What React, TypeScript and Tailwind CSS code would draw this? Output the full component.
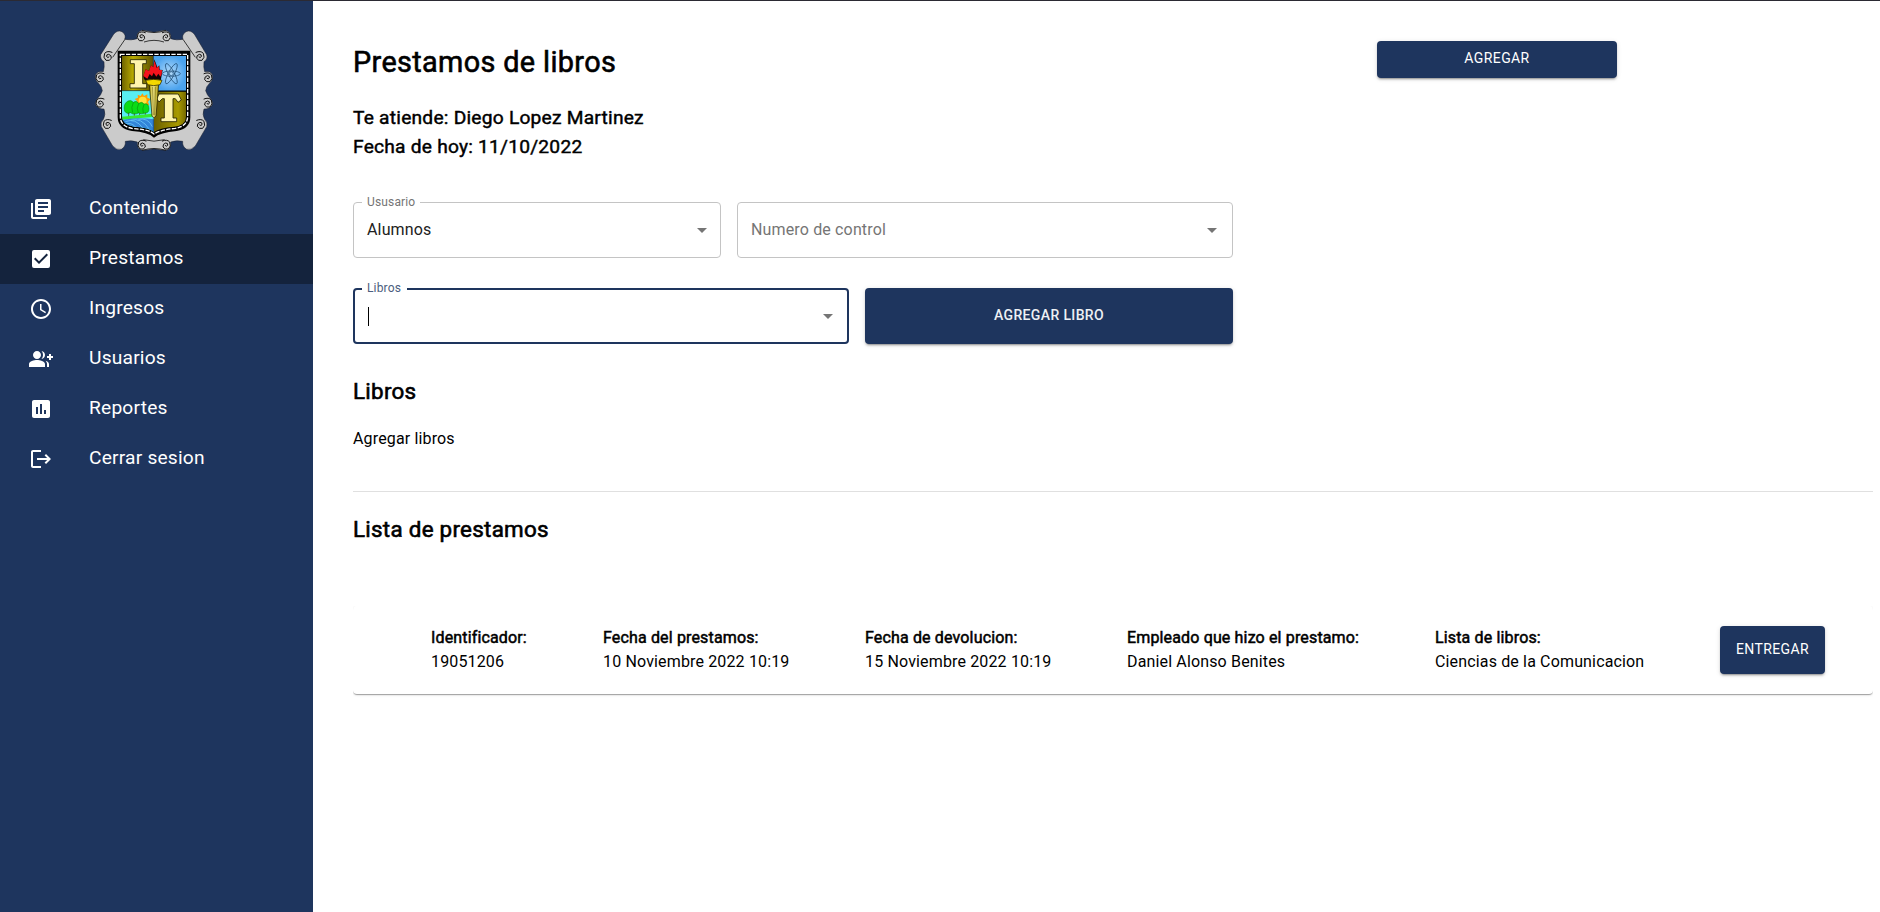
import React from "react";
import { MdLibraryBooks, MdCheckBox, MdAccessTime, MdGroupAdd, MdAssessment, MdLogout, MdArrowDropDown } from "react-icons/md";

const FRAME =
  "M62 104 L100 44 Q112 28 126 35 Q140 44 134 58 Q154 62 171 56 Q168 36 186 31 Q204 33 222 37 Q240 33 256 31 Q276 36 272 56 Q290 62 309 58 Q304 44 318 35 Q332 28 344 44 L380 104 Q384 118 372 125 Q370 142 374 155 Q392 152 397 164 Q400 180 390 188 Q378 200 377 212 Q380 224 392 236 Q400 246 396 256 Q388 268 372 267 Q366 284 374 298 Q384 308 380 320 L346 378 Q334 392 320 388 Q306 380 308 364 Q290 360 272 366 Q274 388 258 391 Q240 390 222 386 Q204 390 188 391 Q170 388 172 366 Q154 360 136 364 Q138 380 124 388 Q110 392 98 378 L64 320 Q60 308 70 298 Q78 284 72 267 Q56 268 48 256 Q44 246 52 236 Q64 224 67 212 Q66 200 54 188 Q44 180 47 164 Q52 152 70 155 Q74 142 72 125 Q60 118 62 104 Z";

function Curl({ x, y, flip }: { x: number; y: number; flip?: boolean }) {
  return (
    <path
      transform={`translate(${x} ${y}) scale(${flip ? -1 : 1} 1)`}
      fill="#cbcbcb"
      stroke="#111"
      strokeWidth="3"
      strokeLinecap="round"
      d="M12 -12 Q-2 -18 -10 -9 Q-16 4 -6 12 Q5 15 10 6 Q11 -4 2 -6 Q-6 -6 -4 1 Q-1 6 3 2"
    />
  );
}

function Crest() {
  return (
    <svg viewBox="0 0 450 420" className="h-[140px] w-[150px]" aria-hidden="true">
      <defs>
        <linearGradient id="gold" x1="0" x2="1">
          <stop offset="0" stopColor="#6e6400" />
          <stop offset="0.35" stopColor="#b8aa00" />
          <stop offset="1" stopColor="#5c5100" />
        </linearGradient>
        <linearGradient id="gold2" x1="0" x2="1">
          <stop offset="0" stopColor="#6a5e00" />
          <stop offset="0.75" stopColor="#a89a00" />
          <stop offset="1" stopColor="#756900" />
        </linearGradient>
        <radialGradient id="sky">
          <stop offset="0" stopColor="#b5dcfb" />
          <stop offset="1" stopColor="#4ba3ee" />
        </radialGradient>
        <linearGradient id="torch" x1="0" x2="1">
          <stop offset="0" stopColor="#a59200" />
          <stop offset="0.4" stopColor="#fff59a" />
          <stop offset="1" stopColor="#a59200" />
        </linearGradient>
        <clipPath id="shield">
          <path d="M126 107 H318 V290 Q318 316 282 320 Q238 324 222 336 Q208 322 162 320 Q126 314 126 288 Z" />
        </clipPath>
      </defs>
      <path fill="#cbcbcb" stroke="#1a1f2b" strokeWidth="1.6" strokeLinejoin="round" d={FRAME} />
      <path
        fill="none"
        stroke="#111"
        strokeWidth="2.4"
        d="M186 31 Q222 44 258 31 M192 66 Q222 56 252 66 M190 359 Q222 368 254 359 M186 391 Q222 380 258 391 M98 112 L135 58 M346 112 L309 58"
      />
      <Curl x={184} y={50} />
      <Curl x={259} y={50} flip />
      <Curl x={84} y={109} />
      <Curl x={360} y={109} flip />
      <Curl x={60} y={173} />
      <Curl x={384} y={173} flip />
      <Curl x={60} y={249} />
      <Curl x={384} y={249} flip />
      <Curl x={82} y={313} />
      <Curl x={362} y={313} flip />
      <Curl x={186} y={375} />
      <Curl x={259} y={375} flip />
      <path fill="#000" d="M113 92 H331 V292 Q331 326 290 333 Q240 338 222 353 Q204 336 156 333 Q113 326 113 292 Z" />
      <path fill="none" stroke="#fff" strokeWidth="4" strokeDasharray="13 4" d="M121 103 H323 V290 Q322 319 286 325 Q240 330 222 342 Q206 328 160 326 Q121 320 121 290 Z" />
      <g clipPath="url(#shield)">
        <path fill="url(#gold)" d="M126 107 H220 V212 H126 Z" />
        <path fill="url(#sky)" d="M220 107 H318 V212 H220 Z" />
        <path fill="#58eef2" d="M126 212 H222 V340 H126 Z" />
        <path fill="url(#gold2)" d="M222 215 H318 V340 H222 Z" />
        <path fill="#ff9d00" d="M187 220 L192 228 L202 223 L202 233 L212 237 L204 245 L208 256 L168 256 L172 244 L164 237 L174 233 L173 224 L182 228 Z" />
        <circle cx="188" cy="242" r="12" fill="#ffe23a" />
        <path fill="#0bdc16" stroke="#067c0a" strokeWidth="1.5" d="M134 274 Q128 252 144 243 Q153 238 160 247 Q170 240 176 250 Q187 243 192 252 Q206 248 207 266 Q207 279 196 279 Q184 284 176 279 Q160 286 152 278 Q140 284 134 274 Z" />
        <path fill="none" stroke="#067c0a" strokeWidth="1.5" d="M160 248 Q152 262 158 278 M176 251 Q168 264 175 279 M192 253 Q186 266 190 279" />
        <path fill="none" stroke="#3a2a10" strokeWidth="2" d="M146 279 V290 M163 281 V289 M179 280 V287 M196 279 V286" />
        <path fill="#35ea31" d="M126 290 L216 281 V291 L126 299 Z" />
        <path fill="#3385d9" d="M126 300 Q170 290 222 298 V340 H126 Z" />
        <path fill="none" stroke="#79d6ff" strokeWidth="2" d="M136 305 Q166 292 190 326 M152 301 Q184 291 208 328 M175 298 Q204 292 217 320 M130 314 Q154 302 171 326" />
      </g>
      <path d="M126 212 H318 M220 107 V338" stroke="#123" strokeWidth="1.5" />
      <path fill="#fff5ad" stroke="#222000" strokeWidth="2.5" d="M151 119 H199 V131 H188 V191 H200 V204 H150 V191 H163 V131 H151 Z" />
      <path fill="#fff5ad" stroke="#222000" strokeWidth="2.5" d="M237 222 H295 L304 240 L294 247 L286 236 H279 V294 H290 V305 H243 V294 H253 V236 H247 L237 246 L230 236 Z" />
      <g fill="none" stroke="#16446c" strokeWidth="2">
        <ellipse cx="274" cy="161" rx="27" ry="8" />
        <ellipse cx="274" cy="161" rx="34" ry="9" transform="rotate(62 274 161)" />
        <ellipse cx="274" cy="161" rx="34" ry="9" transform="rotate(-62 274 161)" />
        <circle cx="274" cy="161" r="6" />
      </g>
      <path fill="url(#torch)" stroke="#151300" strokeWidth="2" d="M208 194 H236 L228 288 L222 293 L216 288 Z" />
      <path d="M218 200 L220 286 M226 200 L224 286" stroke="#685c00" strokeWidth="2" />
      <path fill="#120404" d="M192 178 L190 168 L197 148 L207 153 L213 136 L220 142 L223 118 L232 142 L238 136 L239 149 L248 150 L242 182 H200 Z" />
      <path fill="#f4131d" d="M190 168 L197 148 L207 153 L213 136 L220 142 L223 122 Q228 134 230 144 L236 138 L238 150 L246 150 Q247 162 241 170 L235 161 L229 170 L221 158 L216 169 L209 162 L202 176 Z" />
      <path fill="#f4d800" stroke="#1a1600" strokeWidth="2" d="M197 181 Q220 175 246 181 L240 194 Q220 200 203 194 Z" />
    </svg>
  );
}

const nav = [
  { label: "Contenido", Icon: MdLibraryBooks },
  { label: "Prestamos", Icon: MdCheckBox, active: true },
  { label: "Ingresos", Icon: MdAccessTime },
  { label: "Usuarios", Icon: MdGroupAdd },
  { label: "Reportes", Icon: MdAssessment },
  { label: "Cerrar sesion", Icon: MdLogout },
];

const elevation =
  "shadow-[0px_3px_1px_-2px_rgba(0,0,0,0.2),0px_2px_2px_0px_rgba(0,0,0,0.14),0px_1px_5px_0px_rgba(0,0,0,0.12)]";

interface FieldProps {
  label?: string;
  value: React.ReactNode;
  className: string;
  arrow: string;
  focused?: boolean;
}

function Field({ label, value, className, arrow, focused }: FieldProps) {
  return (
    <fieldset
      className={`flex h-[61px] min-w-0 rounded-[4px] ${className} ${
        focused ? "border-2 border-[#1e355e] pl-[7px]" : "border border-[#c4c4c4] pl-[8px]"
      }`}
    >
      {label ? (
        <legend className={`h-[11px] pl-[5px] text-[12px] leading-[11px] ${focused ? "pr-[6px] text-[#4b5d7e]" : "pr-[5px] text-[#757575]"}`}>
          {label}
        </legend>
      ) : (
        <legend className="h-[11px] w-0" />
      )}
      <div className={`flex h-[50px] flex-1 items-center justify-between pl-[5px] ${arrow} ${focused ? "-mt-[3px]" : "-mt-[3px]"}`}>
        {value}
        <MdArrowDropDown className="size-6 text-[#757575]" />
      </div>
    </fieldset>
  );
}

const loan = [
  { title: "Identificador:", text: "19051206", width: "w-24" },
  { title: "Fecha del prestamos:", text: "10 Noviembre 2022 10:19", width: "w-[186px]" },
  { title: "Fecha de devolucion:", text: "15 Noviembre 2022 10:19", width: "w-[186px]" },
  { title: "Empleado que hizo el prestamo:", text: "Daniel Alonso Benites", width: "w-[232px]" },
  { title: "Lista de libros:", text: "Ciencias de la Comunicacion", width: "w-[209px]" },
];

export default function App() {
  return (
    <div className="flex h-[912px] w-[1880px] flex-col overflow-hidden bg-white font-[Roboto,sans-serif] tracking-[0.00938em] whitespace-nowrap text-black">
      <div className="h-px shrink-0 bg-[#2b2a33]" />
      <div className="flex min-h-0 flex-1">
        <aside className="w-[313px] shrink-0 bg-[#1e355e] text-white">
          <div className="flex h-[183px] pt-[19px] pl-[80px]">
            <Crest />
          </div>
          <nav>
            {nav.map(({ label, Icon, active }) => (
              <div key={label} className={`flex h-[50px] items-center gap-9 pl-[29px] ${active ? "bg-[#14233d]" : ""}`}>
                <Icon className="size-6" />
                <span className="pb-[2px] text-[19.2px] tracking-[0.2px]">{label}</span>
              </div>
            ))}
          </nav>
        </aside>
        <main className="flex-1 pt-10 pr-[7px] pl-10">
          <div className="flex h-[161px] justify-between">
            <div>
              <h1 className="text-[28.8px] leading-[43.2px] tracking-[0.37px] [-webkit-text-stroke:0.6px]">Prestamos de libros</h1>
              <div className="mt-5 text-[19.2px] leading-[28.8px] tracking-[0.22px] [-webkit-text-stroke:0.45px]">
                <p>Te atiende: Diego Lopez Martinez</p>
                <p>Fecha de hoy: 11/10/2022</p>
              </div>
            </div>
            <button className={`mr-64 h-[37px] w-60 rounded-[4px] bg-[#1e355e] pb-[3px] text-[14px] tracking-[0.02857em] text-white ${elevation}`}>
              AGREGAR
            </button>
          </div>
          <div className="-mt-[5px] flex gap-4">
            <Field label="Ususario" className="w-[368px]" arrow="pr-[6px]" value={<span className="text-[16px] text-[#212121]">Alumnos</span>} />
            <Field className="w-[496px]" arrow="pr-[8px]" value={<span className="text-[16px] text-[#757575]">Numero de control</span>} />
          </div>
          <div className="mt-[24px] flex gap-4">
            <Field label="Libros" className="mt-px w-[496px]" arrow="pr-[7px]" focused value={<span className="ml-px h-[19px] w-px bg-black" />} />
            <button className={`mt-[6px] h-14 w-[368px] rounded-[4px] bg-[#1e355e] pb-px text-[14px] font-medium tracking-[0.36px] text-[#edf0f4] ${elevation}`}>
              AGREGAR LIBRO
            </button>
          </div>
          <h2 className="mt-[30px] text-[22.4px] leading-[34px] tracking-[0.27px] [-webkit-text-stroke:0.6px]">Libros</h2>
          <p className="mt-[19px] h-[64px] text-[16px] leading-6">Agregar libros</p>
          <hr className="h-px border-0 bg-[#e0e0e0]" />
          <h2 className="mt-[20px] text-[22.4px] leading-[34px] tracking-[0.27px] [-webkit-text-stroke:0.6px]">Lista de prestamos</h2>
          <section className="mt-[60px] flex h-[88px] items-center gap-[76px] rounded-[4px] pl-[78px] shadow-[0px_2px_1px_-1px_rgba(0,0,0,0.2),0px_1px_1px_0px_rgba(0,0,0,0.14),0px_1px_3px_0px_rgba(0,0,0,0.12)] [clip-path:inset(0_0_-6px_0)]">
            {loan.map(({ title, text, width }) => (
              <div key={title} className={`text-[16px] leading-6 ${width}`}>
                <p className="[-webkit-text-stroke:0.5px]">{title}</p>
                <p>{text}</p>
              </div>
            ))}
            <button className={`h-12 w-[105px] rounded-[4px] bg-[#1e355e] pb-[2px] text-[14px] tracking-[0.02857em] text-white ${elevation}`}>
              ENTREGAR
            </button>
          </section>
        </main>
      </div>
    </div>
  );
}
